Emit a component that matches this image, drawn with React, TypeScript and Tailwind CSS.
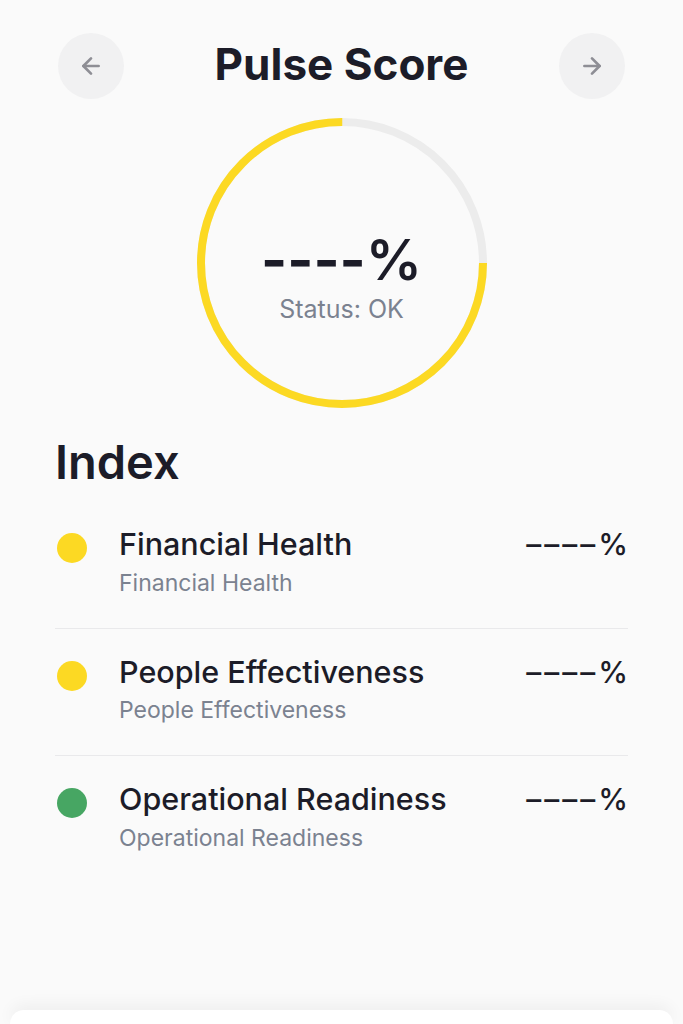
import { ArrowLeft, ArrowRight } from 'lucide-react';

const ITEMS = [
  { name: 'Financial Health', color: 'bg-[#fcd923]' },
  { name: 'People Effectiveness', color: 'bg-[#fcd923]' },
  { name: 'Operational Readiness', color: 'bg-[#47a663]' },
];

function Ring() {
  const r = 141;
  const c = 2 * Math.PI * r;
  return (
    <div className="relative w-[290px] h-[290px]">
      <svg width="290" height="290" viewBox="0 0 290 290" className="absolute inset-0">
        <circle cx="145" cy="145" r={r} fill="none" stroke="#ececec" strokeWidth="8" />
        <circle
          cx="145"
          cy="145"
          r={r}
          fill="none"
          stroke="#fcd923"
          strokeWidth="8"
          strokeDasharray={`${c * 0.75} ${c}`}
        />
      </svg>
      <div className="absolute inset-0 flex flex-col items-center pt-[114px]">
        <div className="text-[56px] font-semibold leading-none text-[#1c1c28]">
          <span className="font-bold">----</span>%
        </div>
        <div className="text-[25px] leading-none text-[#7b8290] mt-[9px]">Status: OK</div>
      </div>
    </div>
  );
}

export default function App() {
  return (
    <div
      className="h-[1024px] bg-[#fafafa] flex flex-col overflow-hidden"
      style={{ fontFamily: 'Inter, "Noto Sans", sans-serif' }}
    >
      {/* Header */}
      <div className="flex items-center justify-between px-[58px] pt-[33px]">
        <button className="w-[66px] h-[66px] rounded-full bg-[#f1f1f2] flex items-center justify-center">
          <ArrowLeft size={26} strokeWidth={2.5} color="#8e8e95" />
        </button>
        <h1 className="text-[44px] font-bold leading-none text-[#1c1c28] -mt-[4px]">Pulse Score</h1>
        <button className="w-[66px] h-[66px] rounded-full bg-[#f1f1f2] flex items-center justify-center">
          <ArrowRight size={26} strokeWidth={2.5} color="#8e8e95" />
        </button>
      </div>

      {/* Score ring */}
      <div className="flex justify-center mt-[19px]">
        <Ring />
      </div>

      {/* Index */}
      <div className="px-[55px] mt-[30px]">
        <h2 className="text-[47px] font-semibold leading-none text-[#1c1c28]">Index</h2>
        <div className="mt-[44px]">
          {ITEMS.map((item, i) => (
            <div
              key={item.name}
              className={`flex items-start pl-[2px] ${i < ITEMS.length - 1 ? 'border-b border-[#e9e9eb] pb-[33px] mb-[28px]' : ''}`}
            >
              <div className={`w-[30px] h-[30px] rounded-full mt-[4px] ${item.color}`} />
              <div className="ml-[32px] flex-1">
                <div className="text-[30.5px] font-medium leading-none text-[#1c1c28]">{item.name}</div>
                <div className="text-[23px] leading-none text-[#7b8290] mt-[12px]">{item.name}</div>
              </div>
              <div className="text-[30px] font-medium leading-none text-[#1c1c28]">
                <span className="tracking-[3px]">––––</span>%
              </div>
            </div>
          ))}
        </div>
      </div>

      <div className="flex-1" />

      {/* Bottom sheet */}
      <div className="mx-[10px] h-[14px] bg-white rounded-t-[30px] shadow-[0_-4px_16px_rgba(0,0,0,0.06)]" />
    </div>
  );
}
